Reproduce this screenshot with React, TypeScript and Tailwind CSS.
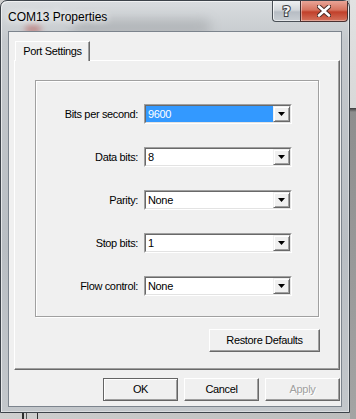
const fields = [
  { label: "Bits per second:", value: "9600", selected: true },
  { label: "Data bits:", value: "8" },
  { label: "Parity:", value: "None" },
  { label: "Stop bits:", value: "1" },
  { label: "Flow control:", value: "None" },
]

const font = "font-['Liberation_Sans',Arial,sans-serif] text-[11px] tracking-[-0.35px]"

function DropButton() {
  return (
    <div className="flex h-[16px] w-[17px] items-center justify-center border border-t-[#f0f0f0] border-l-[#f0f0f0] border-r-[#696969] border-b-[#696969] bg-[#f0f0f0] shadow-[inset_1px_1px_0_#fff,inset_-1px_-1px_0_#a0a0a0]">
      <svg width="7" height="4" viewBox="0 0 7 4">
        <polygon points="0,0 7,0 3.5,4" fill="#000" />
      </svg>
    </div>
  )
}

function Combo({ value, selected }: { value: string; selected?: boolean }) {
  return (
    <div className="h-[20px] w-[148px] border border-t-[#a0a0a0] border-l-[#a0a0a0] border-r-white border-b-white">
      <div className="flex h-full border border-t-[#696969] border-l-[#696969] border-r-[#e3e3e3] border-b-[#e3e3e3] bg-white">
        <div
          className={
            "flex-1 pl-[2px] leading-[16px] " +
            (selected ? "bg-[#3399ff] text-white" : "text-black")
          }
        >
          {value}
        </div>
        <DropButton />
      </div>
    </div>
  )
}

function PushButton({ children, primary, disabled, className = "" }: { children: string; primary?: boolean; disabled?: boolean; className?: string }) {
  return (
    <div
      className={
        "flex h-[23px] items-center justify-center bg-[#f0f0f0] " +
        (primary
          ? "border border-[#646464] shadow-[inset_1px_1px_0_#fff,inset_-1px_-1px_0_#a0a0a0] "
          : "border border-t-white border-l-white border-r-[#696969] border-b-[#696969] shadow-[inset_-1px_-1px_0_#a0a0a0] ") +
        (disabled ? "text-[#a0a0a0] [text-shadow:1px_1px_0_#fff] " : "text-black ") +
        className
      }
    >
      {children}
    </div>
  )
}

function CaptionButtons() {
  return (
    <div className="flex self-start">
      <div className="flex h-[21px] w-[28px] items-center justify-center rounded-bl-[4px] border border-t-0 border-r-0 border-[#4a5057] bg-[linear-gradient(#eef0f2,#d3d7db_45%,#b7bdc4_55%,#c9ced3)] shadow-[inset_1px_0_0_rgba(255,255,255,0.7),inset_0_-1px_0_rgba(255,255,255,0.5)]">
        <span className="font-['DejaVu_Sans',sans-serif] text-[14px] font-bold leading-none text-[#f4f4f4] [paint-order:stroke] [-webkit-text-stroke:2px_#3b3f44]">
          ?
        </span>
      </div>
      <div className="flex h-[21px] w-[48px] items-center justify-center rounded-br-[4px] border border-t-0 border-[#4a3030] bg-[linear-gradient(#e9a597,#d6735f_45%,#c1402b_55%,#d4725c)] shadow-[inset_1px_0_0_rgba(255,255,255,0.4),inset_0_-1px_0_rgba(255,255,255,0.35)]">
        <svg width="14" height="12" viewBox="0 0 14 12">
          <path d="M2 1.5 L12 10.5 M12 1.5 L2 10.5" stroke="#4a2a24" strokeWidth="4.5" strokeLinecap="round" />
          <path d="M2 1.5 L12 10.5 M12 1.5 L2 10.5" stroke="#fff" strokeWidth="2.6" strokeLinecap="round" />
        </svg>
      </div>
    </div>
  )
}

export default function App() {
  return (
    <div className="relative h-[419px] w-[356px] overflow-hidden bg-[linear-gradient(90deg,#cfcfcf,#bdbdbd)]">
      {/* desktop behind the dialog */}
      <div className="absolute right-0 top-0 h-full w-[6px] bg-[linear-gradient(#e2e2e2_0,#d8d8d8_108px,#3a3a3a_108px,#8e8e8e_112px,#a4a4a4)]" />
      <div className="absolute bottom-0 left-[22px] h-[6px] w-[2px] bg-[#2e2e2e]" />
      <div className="absolute bottom-0 left-[26px] h-[6px] w-[1px] bg-[#555]" />
      <div className="absolute bottom-0 left-[37px] h-[6px] w-[1px] bg-[#2e2e2e]" />

      {/* window */}
      <div className="relative flex h-[413px] w-[350px] flex-col rounded-t-[7px] border border-[#3d434a] bg-[linear-gradient(#d9dcdf,#c4c8cc_40px,#b9bec3_60%,#c3c7cb)] shadow-[inset_1px_1px_0_rgba(255,255,255,0.6),inset_-1px_-1px_0_rgba(255,255,255,0.4)]">
        <div className="pointer-events-none absolute left-[70px] top-[18px] h-[16px] w-[140px] rounded-full bg-[#8d9093] opacity-40 blur-[6px]" />
        <div className="pointer-events-none absolute left-[24px] top-[24px] h-[8px] w-[16px] rounded-full bg-[#b4403a] opacity-50 blur-[3px]" />

        <div className="relative flex h-[30px] items-start justify-between pl-[7px] pr-[1px]">
          <span className="mt-[9px] font-['Liberation_Sans',Arial,sans-serif] text-[12px] leading-[14px] text-black [text-shadow:0_0_6px_#fff,0_0_10px_#fff]">
            COM13 Properties
          </span>
          <CaptionButtons />
        </div>

        {/* client area */}
        <div className={"relative ml-[7px] h-[376px] w-[334px] border border-[#7c848d] bg-[#f0f0f0] pl-[5px] pt-[9px] " + font}>
          <div className="relative z-10 ml-[1px] flex h-[20px] w-[75px] items-center justify-center border border-b-0 border-t-white border-l-white border-r-[#696969] bg-[#f0f0f0] pb-[1px] shadow-[inset_-1px_0_0_#a0a0a0]">
            Port Settings
          </div>

          <div className="-mt-[1px] flex h-[310px] w-[326px] flex-col border border-t-white border-l-white border-r-[#696969] border-b-[#696969] pl-[20px] pr-[19px] pt-[19px] shadow-[inset_-1px_-1px_0_#a0a0a0]">
            <div className="flex h-[237px] w-[284px] flex-col gap-[23px] border border-[#a0a0a0] pt-[23px] shadow-[inset_1px_1px_0_#fff,1px_1px_0_#fff]">
              {fields.map((f) => (
                <div key={f.label} className="flex h-[20px] items-center gap-[6px]">
                  <div className="w-[102px] text-right text-black">{f.label}</div>
                  <Combo value={f.value} selected={f.selected} />
                </div>
              ))}
            </div>
            <div className="mt-[12px] flex justify-end">
              <PushButton className="w-[111px]">Restore Defaults</PushButton>
            </div>
          </div>

          <div className="mt-[8px] flex justify-end gap-[6px] pr-[1px]">
            <PushButton primary className="w-[75px]">OK</PushButton>
            <PushButton className="w-[75px]">Cancel</PushButton>
            <PushButton disabled className="w-[75px]">Apply</PushButton>
          </div>
        </div>
      </div>
    </div>
  )
}
